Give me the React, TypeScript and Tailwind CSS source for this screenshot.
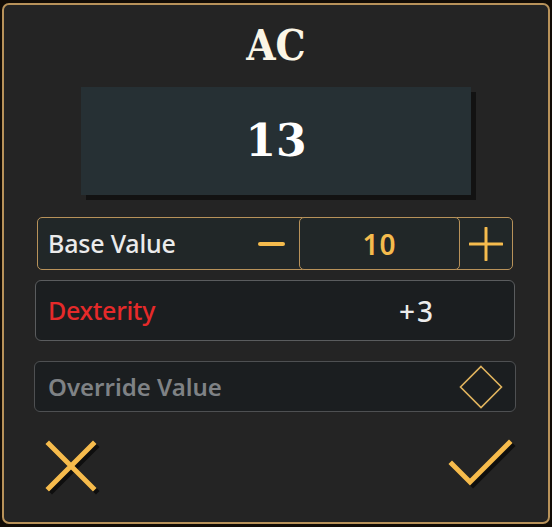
import React from "react";

const serif = { fontFamily: '"DejaVu Serif", "Liberation Serif", serif' };
const titleFont = { fontFamily: '"DejaVu Serif Condensed", "DejaVu Serif", serif' };
const sans = { fontFamily: '"Noto Sans", "Open Sans", sans-serif' };

export default function App() {
  return (
    <div className="w-[552px] h-[527px] bg-[#120c06] overflow-hidden pt-[3px] pl-[2px]">
      <div className="w-[548px] h-[521px] rounded-[7px] border-2 border-[#b8925a] bg-[#242424] pt-[19px] flex flex-col">
        <div className="h-[44px] flex items-center justify-center text-[42px] font-bold text-[#fbf5e6] leading-none" style={titleFont}>
          AC
        </div>
        <div className="mt-[19px] mx-auto w-[390px] h-[108px] bg-[#263034] shadow-[5px_5px_0_#121212] flex items-center justify-center">
          <span className="text-[44px] font-bold text-white leading-none" style={serif}>13</span>
        </div>

        <div className="mt-[22px] ml-[33px] w-[476px] h-[53px] rounded-[5px] border-[1.5px] border-[#b8925a] bg-[#212728] flex items-center relative">
          <span className="ml-[10px] text-[25px] text-[#ebebeb] font-medium tracking-[-0.2px]" style={sans}>Base Value</span>
          <div className="ml-auto mr-[14px] w-[27px] h-[4px] rounded-full bg-[#f5bb4d]" />
          <div className="w-[161px] h-[53px] -my-[1.5px] rounded-[5px] border-[1.5px] border-[#b8925a] bg-[#212728] flex items-center justify-center">
            <span className="text-[28px] text-[#f5bb4d] font-semibold tracking-[1px]" style={sans}>10</span>
          </div>
          <div className="w-[52px] flex items-center justify-center">
            <svg width="34" height="34" viewBox="0 0 34 34">
              <path d="M17 1 V33 M1 17 H33" stroke="#f5bb4d" strokeWidth="3" strokeLinecap="round" />
            </svg>
          </div>
        </div>

        <div className="mt-[10px] ml-[31px] w-[480px] h-[61px] rounded-[6px] border-[1.5px] border-[#5a5c5e] bg-[#1b1e20] flex items-center">
          <span className="ml-[12px] text-[25px] text-[#e62a2a] font-medium tracking-[-0.3px]" style={sans}>Dexterity</span>
          <span className="ml-[244px] text-[28px] text-[#ececec] font-medium tracking-[2px]" style={sans}>+3</span>
        </div>

        <div className="mt-[20px] ml-[30px] w-[482px] h-[51px] rounded-[6px] border-[1.5px] border-[#4e5052] bg-[#1b1e20] flex items-center">
          <span className="ml-[13px] text-[24px] text-[#7f8285] font-semibold" style={sans}>Override Value</span>
          <svg className="ml-auto mr-[12px]" width="44" height="44" viewBox="0 0 44 44">
            <path d="M22 1.5 L42.5 22 L22 42.5 L1.5 22 Z" fill="none" stroke="#e1b45e" strokeWidth="1.6" />
          </svg>
        </div>

        <div className="mt-[26px] flex justify-between pl-[39px] pr-[31px]">
          <svg width="58" height="58" viewBox="0 0 58 58">
            <g stroke="#0c0c0c" strokeWidth="5" strokeLinecap="square" opacity="0.9">
              <path d="M6 6 L50 50 M50 6 L6 50" transform="translate(3 3)" />
            </g>
            <g stroke="#f6bb4c" strokeWidth="5" strokeLinecap="square">
              <path d="M6 6 L50 50 M50 6 L6 50" />
            </g>
          </svg>
          <svg width="70" height="54" viewBox="0 0 70 54">
            <path d="M5 26 L23 44 L62 5" fill="none" stroke="#0c0c0c" strokeWidth="5" strokeLinecap="square" transform="translate(3 3)" opacity="0.9" />
            <path d="M5 26 L23 44 L62 5" fill="none" stroke="#f6bb4c" strokeWidth="5" strokeLinecap="square" />
          </svg>
        </div>
      </div>
    </div>
  );
}
